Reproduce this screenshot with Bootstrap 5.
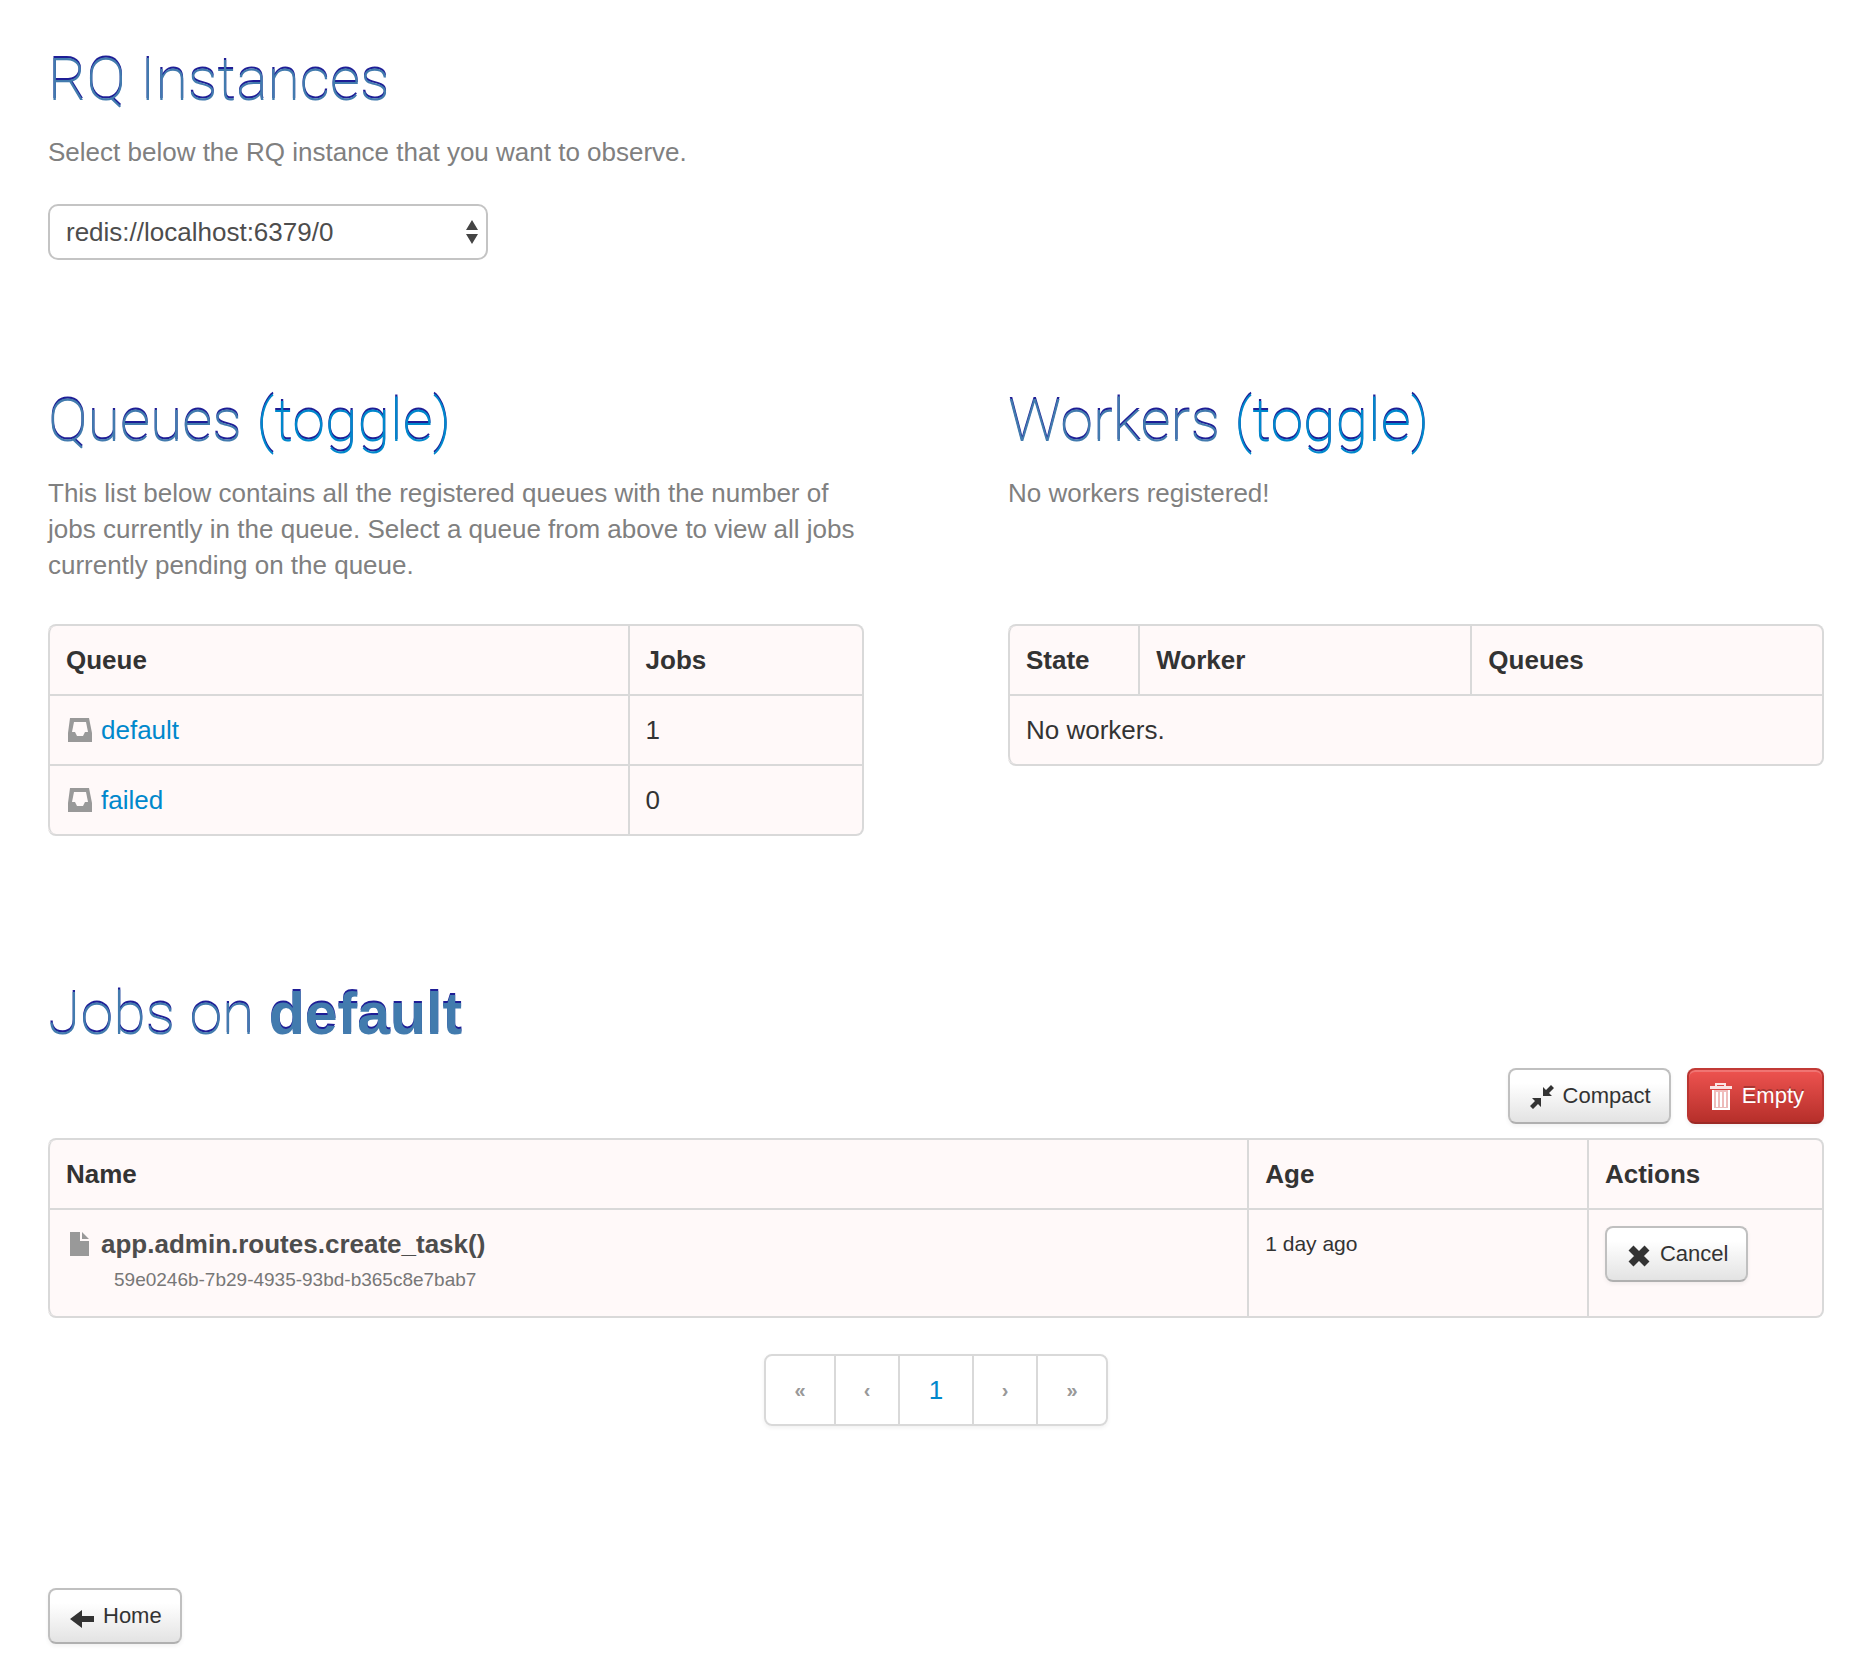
<!DOCTYPE html>
<html lang="en">
<head>
<meta charset="utf-8">
<meta name="viewport" content="width=device-width, initial-scale=1">
<title>RQ Dashboard</title>
<link rel="stylesheet" href="https://cdn.jsdelivr.net/npm/bootstrap@5.3.0/dist/css/bootstrap.min.css">
<style>
  body { font-family: "Liberation Sans", Arial, sans-serif; font-size: 26px; line-height: 36px; color: #333; background: #fff; }
  a { color: #0088cc; text-decoration: none; }
  .page { padding: 40px 32px 20px 48px; }
  .title { font-family: Roboto, "Liberation Sans", sans-serif; font-size: 59px; line-height: 80px; font-weight: 200; color: #427bae; text-shadow: 0 -2px 0 #1e1e96; margin-bottom: 14px; }
  .title strong { font-family: "Liberation Sans", Arial, sans-serif; font-weight: 700; }
  .intro { color: #808080; margin-bottom: 41px; }
  .instances { margin-bottom: 121px; }
  .instances .intro { margin-bottom: 34px; }
  .picker { width: 440px; height: 56px; padding: 0 16px; font-size: 26px; line-height: 36px; color: #4d4d4d; border: 2px solid #c4c4c4; border-radius: 10px; background: #fff; appearance: none; }
  .picker-arrows { position: absolute; right: 10px; top: 16px; pointer-events: none; }
  .halves { column-gap: 144px; margin-bottom: 138px; }
  .halves > section { flex: 1 1 0; min-width: 0; }
  .halves .intro { min-height: 108px; }
  .grid { width: 100%; table-layout: fixed; border-collapse: separate; border-spacing: 0; border: 2px solid #d9d9d9; border-left: 0; border-radius: 8px; background: #fff9f9; }
  .grid th, .grid td { padding: 16px; vertical-align: top; border-left: 2px solid #d9d9d9; }
  .grid td { border-top: 2px solid #d9d9d9; }
  .grid th:first-child { border-top-left-radius: 8px; }
  .grid tr:last-child > td:first-child { border-bottom-left-radius: 8px; }
  .grid svg { vertical-align: -4px; margin-right: 9px; }
  .job-name { color: #4d4d4d; font-weight: 700; }
  .job-id { font-size: 19px; color: #777; padding-left: 48px; }
  .age { font-size: 21px; }
  .tool { font-size: 22px; line-height: 36px; height: 56px; padding: 0 18px; color: #333; border: 2px solid #c0c0c0; border-bottom-color: #b0b0b0; border-radius: 8px; background: linear-gradient(#fff 25%, #e3e3e3); box-shadow: 0 2px 4px rgba(0,0,0,.06); display: inline-flex; align-items: center; gap: 7px; }
  .tool.danger { color: #fff; border-color: #c23a36 #b93531 #9c2a26; background: linear-gradient(#ee5350, #b62f2a); box-shadow: inset 0 2px 0 rgba(255,255,255,.2), 0 2px 4px rgba(0,0,0,.06); text-shadow: 0 -2px 0 rgba(0,0,0,.25); }
  .tools { gap: 16px; margin-bottom: 14px; }
  .cancel-cell { padding-bottom: 34px !important; }
  .pager { margin: 36px 0 162px; }
  .pager .page-link { width: 66px; height: 72px; padding: 0; font-size: 20px; line-height: 68px; font-weight: 700; text-align: center; color: #999; background: #fff; border: 2px solid #d9d9d9; }
  .pager .page-item + .page-item .page-link { margin-left: -2px; }
  .pager .page-item:first-child .page-link { border-radius: 8px 0 0 8px; width: 72px; }
  .pager .page-item:last-child .page-link { border-radius: 0 8px 8px 0; width: 72px; }
  .pager .page-item.here .page-link { font-size: 26px; font-weight: 400; width: 76px; color: #0088cc; }
  .pager ul { box-shadow: 0 2px 4px rgba(0,0,0,.06); border-radius: 8px; }
</style>
<script src="https://cdn.jsdelivr.net/npm/bootstrap@5.3.0/dist/js/bootstrap.bundle.min.js"></script>
</head>
<body>
<svg width="0" height="0" class="d-none" aria-hidden="true">
  <symbol id="inbox" viewBox="0 0 26 26"><path fill="#999" fill-rule="evenodd" d="M4 1h19l3 15v9H2v-9zM8 5 6 15h3l2 4h6l2-4h3L20 5z"/></symbol>
</svg>
<main class="page">
  <section class="instances">
    <h1 class="title">RQ Instances</h1>
    <p class="intro"><label for="instance">Select below the RQ instance that you want to observe.</label></p>
    <div class="position-relative d-inline-block align-top">
      <select id="instance" class="picker d-block"><option>redis://localhost:6379/0</option></select>
      <svg class="picker-arrows" width="12" height="24" viewBox="0 0 12 24" aria-hidden="true"><path fill="#444" d="M6 0l6 10H0zM0 14h12L6 24z"/></svg>
    </div>
  </section>

  <div class="halves d-flex">
    <section>
      <h1 class="title">Queues <a href="#queues">(toggle)</a></h1>
      <p class="intro">This list below contains all the registered queues with the number of jobs currently in the queue. Select a queue from above to view all jobs currently pending on the queue.</p>
      <table class="grid" id="queues">
        <colgroup><col style="width:71.2%"><col></colgroup>
        <thead><tr><th>Queue</th><th>Jobs</th></tr></thead>
        <tbody>
          <tr><td><svg width="26" height="26" aria-hidden="true"><use href="#inbox"/></svg><a href="#default">default</a></td><td>1</td></tr>
          <tr><td><svg width="26" height="26" aria-hidden="true"><use href="#inbox"/></svg><a href="#failed">failed</a></td><td>0</td></tr>
        </tbody>
      </table>
    </section>
    <section>
      <h1 class="title">Workers <a href="#workers">(toggle)</a></h1>
      <p class="intro">No workers registered!</p>
      <table class="grid" id="workers">
        <colgroup><col style="width:16%"><col style="width:40.8%"><col></colgroup>
        <thead><tr><th>State</th><th>Worker</th><th>Queues</th></tr></thead>
        <tbody><tr><td colspan="3">No workers.</td></tr></tbody>
      </table>
    </section>
  </div>

  <section>
    <h1 class="title">Jobs on <strong>default</strong></h1>
    <div class="tools d-flex justify-content-end">
      <button type="button" class="tool"><svg width="28" height="28" viewBox="0 0 28 28" aria-hidden="true"><path fill="#333" d="M15 14V5l3 3 5-5 3 3-5 5 3 3zM13 16v9l-3-3-5 5-3-3 5-5-3-3z"/></svg>Compact</button>
      <button type="button" class="tool danger"><svg width="28" height="28" viewBox="0 0 28 28" aria-hidden="true"><path fill="#fff" fill-opacity=".85" d="M8 4V1h11v3h6v3H3V4h5zm2 0h7V3h-7z"/><path fill="#fff" fill-opacity=".65" d="M5 8h18v20H5z"/><path stroke="#fff" stroke-width="2" fill="none" d="M6 8v19h16V8M10 10v15M14 10v15M18 10v15"/></svg>Empty</button>
    </div>
    <table class="grid">
      <colgroup><col><col style="width:19.15%"><col style="width:13.25%"></colgroup>
      <thead><tr><th>Name</th><th>Age</th><th>Actions</th></tr></thead>
      <tbody><tr>
        <td>
          <div class="job-name"><svg width="26" height="26" viewBox="0 0 26 26" aria-hidden="true"><path fill="#999" d="M4 1h10v9h9v15H4zM16 1l7 7h-7z"/></svg>app.admin.routes.create_task()</div>
          <div class="job-id">59e0246b-7b29-4935-93bd-b365c8e7bab7</div>
        </td>
        <td class="age">1 day ago</td>
        <td class="cancel-cell"><button type="button" class="tool"><svg class="m-0" width="28" height="28" viewBox="0 0 28 28" aria-hidden="true"><path stroke="#333" stroke-width="7" d="M6 8l16 16M22 8L6 24"/></svg>Cancel</button></td>
      </tr></tbody>
    </table>
    <nav class="pager d-flex justify-content-center" aria-label="Job pages">
      <ul class="pagination m-0">
        <li class="page-item"><a class="page-link" href="#first">«</a></li>
        <li class="page-item"><a class="page-link" href="#previous">‹</a></li>
        <li class="page-item here"><a class="page-link" href="#1">1</a></li>
        <li class="page-item"><a class="page-link" href="#next">›</a></li>
        <li class="page-item"><a class="page-link" href="#last">»</a></li>
      </ul>
    </nav>
  </section>
  <a class="tool" href="#home"><svg width="28" height="28" viewBox="0 0 28 28" aria-hidden="true"><path fill="#333" d="M2 17L14 8v6h12v6H14v6z"/></svg>Home</a>
</main>
</body>
</html>
